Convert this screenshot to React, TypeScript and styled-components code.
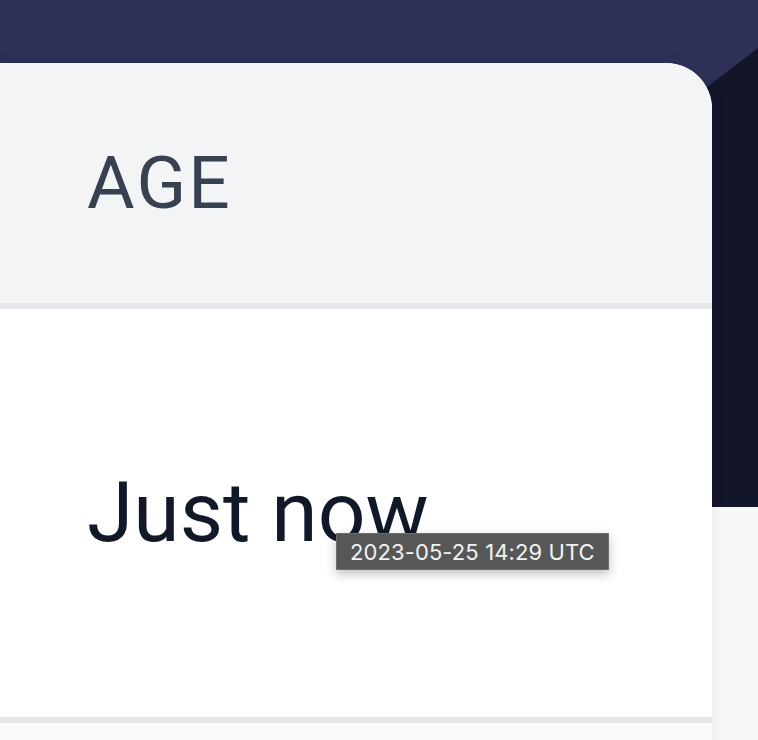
import React from "react";
import styled, { createGlobalStyle } from "styled-components";

const Global = createGlobalStyle`
  html, body { margin: 0; padding: 0; }
  body {
    background: #f7f8fa;
    font-family: Roboto, "Noto Sans", sans-serif;
    overflow: hidden;
  }
`;

const Page = styled.div`
  width: 758px;
  height: 740px;
  overflow: hidden;
`;

const Hero = styled.div`
  position: relative;
  height: 507px;
  background: #2f3057;
  &::after {
    content: "";
    position: absolute;
    inset: 0;
    background: #131629;
    clip-path: polygon(758px 48px, 758px 507px, 400px 507px, 400px 322px);
  }
`;

const Card = styled.div`
  position: relative;
  z-index: 1;
  margin-top: -444px;
  width: 712px;
  background: #ffffff;
  border-top-right-radius: 46px;
  overflow: hidden;
  box-shadow: 0 0 18px rgba(17, 24, 39, 0.07);
`;

const HeadRow = styled.div`
  height: 240px;
  display: flex;
  align-items: center;
  padding-left: 87px;
  background: #f3f4f6;
  border-bottom: 6px solid #e5e7eb;
`;

const HeadCell = styled.span`
  font-size: 73px;
  font-weight: 400;
  letter-spacing: 0.03em;
  text-transform: uppercase;
  color: #374151;
  line-height: 1;
`;

const BodyRow = styled.div<{ $striped?: boolean }>`
  height: ${(p) => (p.$striped ? "60px" : "408px")};
  display: flex;
  align-items: center;
  padding-left: 87px;
  background: ${(p) => (p.$striped ? "#f9fafb" : "#ffffff")};
  border-bottom: ${(p) => (p.$striped ? "none" : "6px solid #e5e7eb")};
`;

const Cell = styled.span`
  position: relative;
  font-size: 84px;
  font-weight: 400;
  color: #111827;
  line-height: 1;
`;

const Tooltip = styled.span`
  position: absolute;
  left: 249px;
  top: 62px;
  white-space: nowrap;
  box-sizing: border-box;
  height: 37px;
  padding: 0 13px;
  display: flex;
  align-items: center;
  background: #575757;
  border: 1px solid #6e6e6e;
  color: #f2f2f2;
  font-family: Inter, "Liberation Sans", Arial, sans-serif;
  font-size: 22px;
  letter-spacing: 0.1px;
  line-height: 1;
  box-shadow: 0 4px 10px rgba(0, 0, 0, 0.25);
`;

export default function App() {
  return (
    <Page>
      <Global />
      <Hero />
      <Card>
        <HeadRow>
          <HeadCell>Age</HeadCell>
        </HeadRow>
        <BodyRow>
          <Cell>
            Just now
            <Tooltip>2023-05-25 14:29 UTC</Tooltip>
          </Cell>
        </BodyRow>
        <BodyRow $striped />
      </Card>
    </Page>
  );
}
